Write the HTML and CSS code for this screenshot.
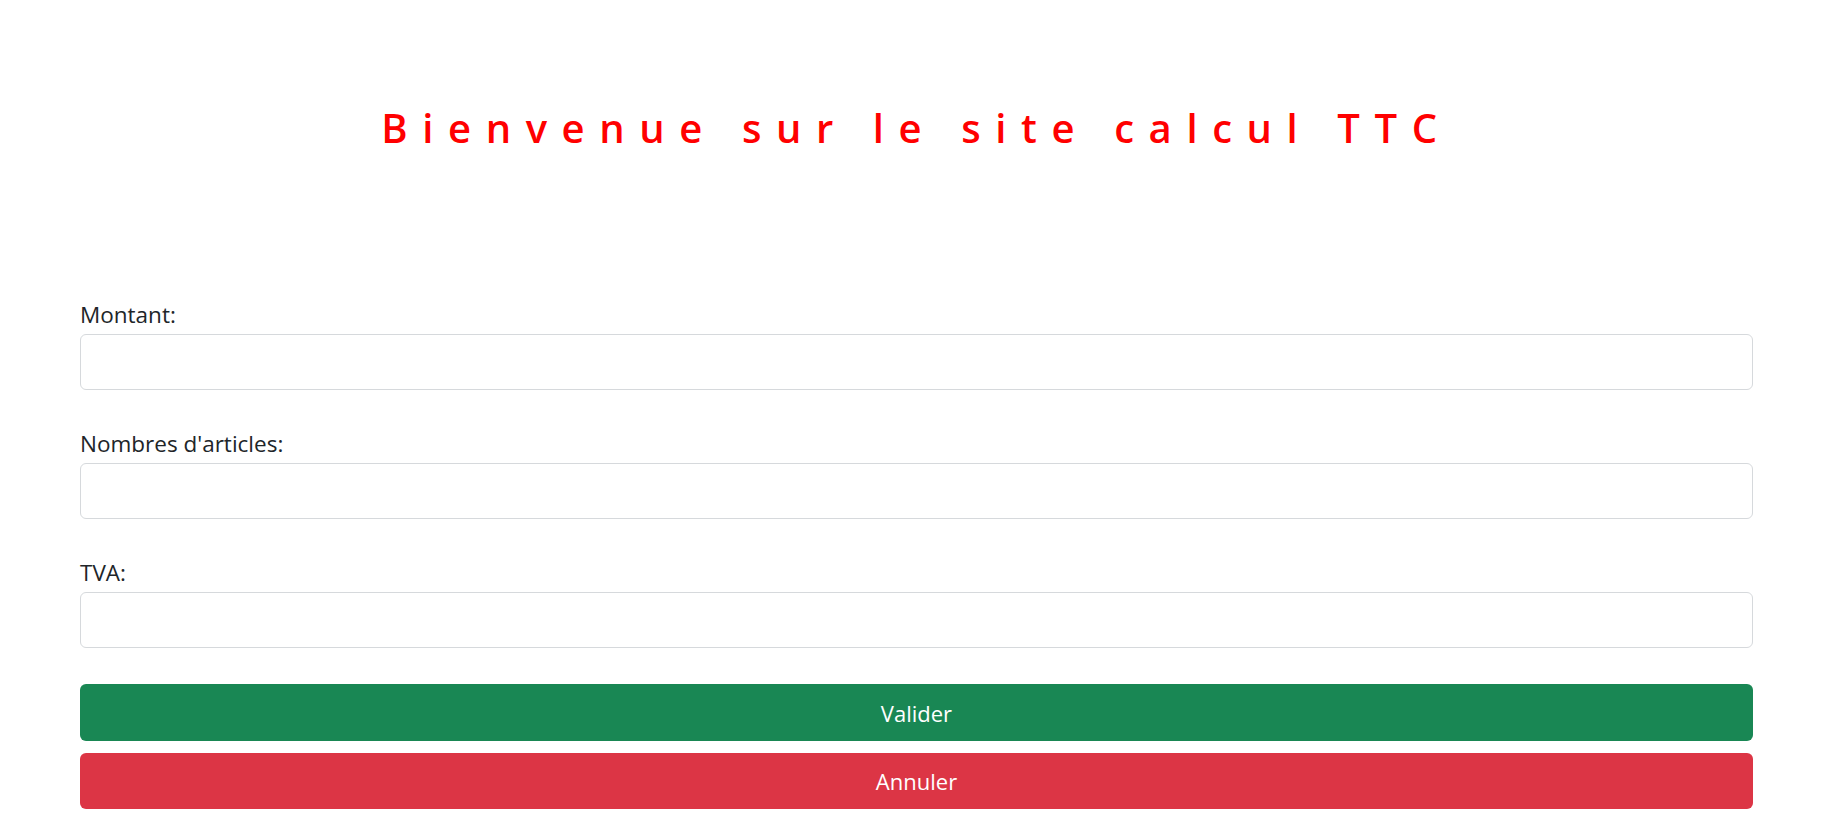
FILE: index.html
```html
<!DOCTYPE html>
<html lang="fr">
<head>
<meta charset="utf-8">
<title>Calcul TTC</title>
<link rel="stylesheet" href="styles.css">
</head>
<body>
<main class="page">
  <header class="hero">
    <h1 class="title">Bienvenue sur le site calcul TTC</h1>
  </header>
  <form class="calc-form">
    <div class="field">
      <label class="field-label" for="montant">Montant:</label>
      <input class="field-input" id="montant" type="text">
    </div>
    <div class="field">
      <label class="field-label" for="articles">Nombres d'articles:</label>
      <input class="field-input" id="articles" type="text">
    </div>
    <div class="field field-last">
      <label class="field-label" for="tva">TVA:</label>
      <input class="field-input" id="tva" type="text">
    </div>
    <div class="actions">
      <button class="btn btn-success" type="submit">Valider</button>
      <button class="btn btn-danger" type="reset">Annuler</button>
    </div>
  </form>
</main>
</body>
</html>
```

FILE: styles.css
```css
* { box-sizing: border-box; }

html, body {
  margin: 0;
  padding: 0;
  background: #fff;
}

body {
  font-family: "Open Sans", "Noto Sans", sans-serif;
  color: #212529;
}

.page {
  padding: 0 87px 0 80px;
}

.hero {
  padding-top: 104px;
  text-align: center;
}

.title {
  margin: 0;
  font-size: 40px;
  line-height: 48px;
  font-weight: 600;
  letter-spacing: 14.6px;
  color: #ff0000;
}

.calc-form {
  margin-top: 148px;
  display: flex;
  flex-direction: column;
}

.field {
  display: flex;
  flex-direction: column;
  margin-bottom: 39px;
}

.field-last {
  margin-bottom: 36px;
}

.field-label {
  font-size: 22.5px;
  line-height: 30px;
  margin-bottom: 4px;
}

.field-input {
  height: 56px;
  border: 1px solid #d6d9dc;
  border-radius: 6px;
  font-family: inherit;
  font-size: 20px;
  padding: 8px 16px;
  background: #fff;
}

.actions {
  display: flex;
  flex-direction: column;
  gap: 12px;
}

.btn {
  height: 57px;
  border: 0;
  border-radius: 6px;
  font-family: inherit;
  font-size: 22px;
  color: #fff;
  cursor: pointer;
}

.btn-success { background: #198754; }
.btn-danger { background: #dc3545; height: 56px; }
```
